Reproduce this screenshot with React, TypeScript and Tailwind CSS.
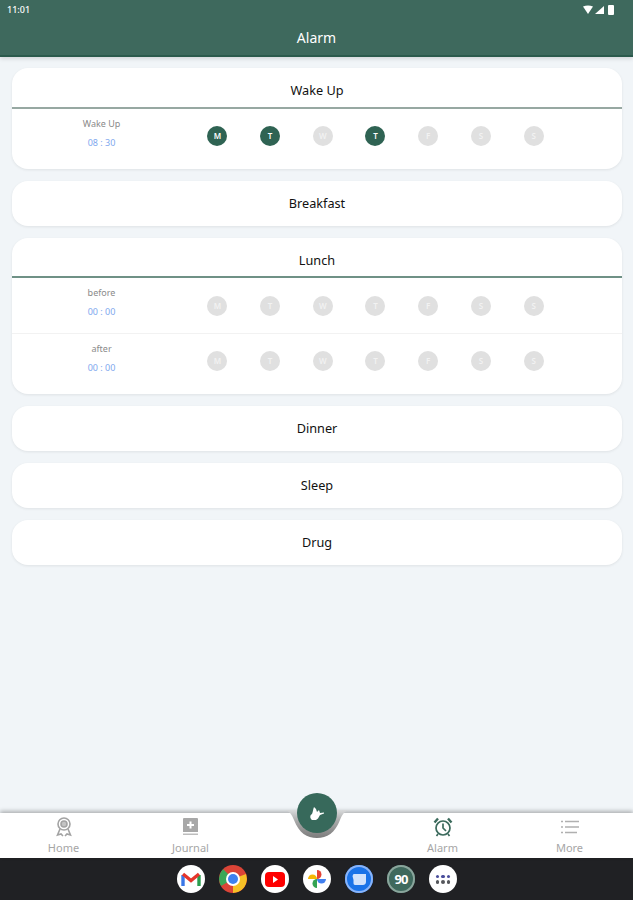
import type { ReactNode } from "react"

const DAYS = ["M", "T", "W", "T", "F", "S", "S"]

function DayDot({ label, on }: { label: string; on?: boolean }) {
  return (
    <div className="flex justify-center">
      <div
        className={`flex h-5 w-5 items-center justify-center rounded-full text-[8px] font-semibold ${
          on ? "bg-[#2f6353] text-white" : "bg-[#e0e0e0] text-[#f2f2f2]"
        }`}
      >
        {label}
      </div>
    </div>
  )
}

function AlarmRow({
  label,
  time,
  active = [],
  className = "",
}: {
  label: string
  time: string
  active?: number[]
  className?: string
}) {
  return (
    <div className={`flex items-center pr-[62px] ${className}`}>
      <div className="flex w-[179px] flex-col items-center gap-[7px] pb-[6px] text-[9px] leading-[12px]">
        <span className="text-[#8a8a8a]">{label}</span>
        <span className="text-[#7fa8ee]">{time}</span>
      </div>
      <div className="grid flex-1 grid-cols-7">
        {DAYS.map((d, i) => (
          <DayDot key={i} label={d} on={active.includes(i)} />
        ))}
      </div>
    </div>
  )
}

function Card({
  title,
  headClass = "h-[45px]",
  children,
}: {
  title: string
  headClass?: string
  children?: ReactNode
}) {
  return (
    <div className="overflow-hidden rounded-[16px] bg-white shadow-[0_1px_3px_rgba(0,0,0,0.08)]">
      <div className={`flex items-center justify-center text-[12.7px] text-[#111] ${headClass}`}>{title}</div>
      {children}
    </div>
  )
}

function NavItem({ label, icon }: { label: string; icon: ReactNode }) {
  return (
    <div className="flex w-[127px] flex-col items-center pt-[4px]">
      <div className="flex h-[20px] items-center justify-center">{icon}</div>
      <span className="mt-[4px] text-[11px] leading-[14px] text-[#a6a6a6]">{label}</span>
    </div>
  )
}

function DockIcon({ children, bg = "bg-white" }: { children: ReactNode; bg?: string }) {
  return (
    <div className={`flex h-[28px] w-[28px] items-center justify-center overflow-hidden rounded-full ${bg}`}>
      {children}
    </div>
  )
}

export default function App() {
  return (
    <div
      className="relative flex h-[900px] w-[633px] flex-col overflow-hidden bg-[#f1f5f8]"
      style={{ fontFamily: '"Noto Sans", sans-serif' }}
    >
      {/* status bar + title */}
      <header className="relative z-10 h-[57px] border-b-2 border-[#2b5a4c] bg-[#3e695d] text-white shadow-[0_2px_4px_rgba(0,0,0,0.12)]">
        <div className="flex h-[19px] items-center justify-between pl-[7px] pr-[19px]">
          <span className="text-[9px] font-medium">11:01</span>
          <svg width="31" height="10" viewBox="0 0 31 10" fill="white">
            <path d="M0 1.5 Q5 -0.5 10 1.5 L5 9 Z" />
            <path d="M12 9 L21 1 V9 Z" />
            <rect x="25" y="0" width="6" height="10" rx="1" />
          </svg>
        </div>
        <div className="flex h-[36px] items-center justify-center text-[14px]">Alarm</div>
      </header>

      {/* list */}
      <main className="flex flex-1 flex-col gap-[12px] pl-[12px] pr-[11px] pt-[11px]">
        <Card title="Wake Up" headClass="h-[41px] border-b-2 border-[#97a8a2] pt-[6px]">
          <AlarmRow label="Wake Up" time="08 : 30" active={[0, 1, 3]} className="h-[60px] pb-[6px]" />
        </Card>
        <Card title="Breakfast" />
        <Card title="Lunch" headClass="h-[40px] border-b-2 border-[#6f9186] pt-[7px]">
          <AlarmRow label="before" time="00 : 00" className="h-[56px] border-b border-[#f2f2f2]" />
          <AlarmRow label="after" time="00 : 00" className="h-[60px] pb-[6px]" />
        </Card>
        <Card title="Dinner" />
        <Card title="Sleep" />
        <Card title="Drug" />
      </main>

      {/* bottom nav */}
      <nav className="relative flex h-[45px] justify-between bg-white shadow-[0_-2px_4px_rgba(0,0,0,0.28)]">
        <div className="flex">
          <NavItem
            label="Home"
            icon={
              <svg width="18" height="20" viewBox="0 0 18 20" fill="none" stroke="#a3a3a3" strokeWidth="1.6">
                <circle cx="9" cy="7" r="6" />
                <circle cx="9" cy="7" r="3" fill="#c4c4c4" />
                <path d="M5 12 L2.5 18 L6 17 L8 19 M13 12 L15.5 18 L12 17 L10 19" />
              </svg>
            }
          />
          <NavItem
            label="Journal"
            icon={
              <svg width="15" height="18" viewBox="0 0 15 18">
                <path d="M1 0 H14 a1 1 0 0 1 1 1 V14 H0 V1 a1 1 0 0 1 1 -1 Z" fill="#a8a8a8" />
                <rect x="0" y="15.5" width="15" height="1.5" fill="#bdbdbd" />
                <path d="M6.5 3.5 H8.5 V6 H11 V8 H8.5 V10.5 H6.5 V8 H4 V6 H6.5 Z" fill="white" />
              </svg>
            }
          />
        </div>
        <div className="flex">
          <NavItem
            label="Alarm"
            icon={
              <svg width="20" height="20" viewBox="0 0 20 20" fill="none" stroke="#3b6a5c" strokeWidth="1.7">
                <circle cx="10" cy="11" r="7" />
                <path d="M10 6.5 V11 L13 14" />
                <path d="M1.5 5.5 L5 1.5 M18.5 5.5 L15 1.5" strokeWidth="2.4" />
                <path d="M5 17 L3.5 19 M15 17 L16.5 19" />
              </svg>
            }
          />
          <NavItem
            label="More"
            icon={
              <svg width="18" height="14" viewBox="0 0 18 14" stroke="#b0b0b0" strokeWidth="1.6">
                <path d="M4 1.5 H18 M4 7 H18 M4 12.5 H16" />
                <path d="M0 1.5 H2 M0 7 H2 M0 12.5 H2" />
              </svg>
            }
          />
        </div>

        {/* notch + fab */}
        <svg className="absolute left-[284px] top-[-3px]" width="66" height="30" viewBox="0 0 66 30">
          <defs>
            <linearGradient id="cup" x1="0" y1="0" x2="0" y2="1">
              <stop offset="0" stopColor="#d8dadb" />
              <stop offset="0.4" stopColor="#a8a8a8" />
              <stop offset="1" stopColor="#7c7c7c" />
            </linearGradient>
          </defs>
          <path d="M0 0 H66 C60 1 58 5 56 10 C51 23 43 28 33 28 C23 28 15 23 10 10 C8 5 6 1 0 0 Z" fill="url(#cup)" />
        </svg>
        <div className="absolute left-[297px] top-[-20px] flex h-[40px] w-[40px] items-center justify-center rounded-full bg-[#37695b]">
          <svg width="16" height="13" viewBox="0 0 16 13" fill="white">
            <path d="M5 0 L7 2 L8 5 L10 3 L11 6 L15 5.5 L15 6.5 L11 8 L9 11.5 L7 13 H3 C0.5 11 1 8 3 7 C4 5 4 2 5 0 Z" />
          </svg>
        </div>
      </nav>

      {/* android dock */}
      <footer className="flex h-[42px] items-center justify-center gap-[14px] bg-[#202124] pl-[1px]">
        <DockIcon>
          <svg width="20" height="16" viewBox="0 0 20 16" fill="none" strokeWidth="3.4">
            <path d="M2 15 V4" stroke="#3b78e7" />
            <path d="M18 15 V4" stroke="#2a9d4e" />
            <path d="M2 3 L10 9.5 L18 3" stroke="#e5352b" />
          </svg>
        </DockIcon>
        <DockIcon bg="bg-[#db4437]">
          <svg width="28" height="28" viewBox="0 0 28 28">
            <path d="M14 14 L2 21 A14 14 0 0 1 4 4 Z" fill="#3aa757" />
            <path d="M14 14 L14 28 A14 14 0 0 0 27 9 Z" fill="#f6c026" />
            <circle cx="14" cy="14" r="7" fill="white" />
            <circle cx="14" cy="14" r="5" fill="#3d81f0" />
          </svg>
        </DockIcon>
        <DockIcon>
          <svg width="20" height="15" viewBox="0 0 20 15">
            <rect width="20" height="15" rx="4" fill="#f00" />
            <path d="M8 4 L13 7.5 L8 11 Z" fill="white" />
          </svg>
        </DockIcon>
        <DockIcon>
          <svg width="20" height="20" viewBox="0 0 20 20">
            <path d="M10 10 H1 A4.5 4.5 0 0 1 10 10 Z" fill="#f6b704" />
            <path d="M10 10 V1 A4.5 4.5 0 0 1 10 10 Z" fill="#e54335" />
            <path d="M10 10 H19 A4.5 4.5 0 0 1 10 10 Z" fill="#4280ef" />
            <path d="M10 10 V19 A4.5 4.5 0 0 1 10 10 Z" fill="#34a353" />
          </svg>
        </DockIcon>
        <DockIcon bg="bg-[#1a73e8] ring-2 ring-inset ring-[#8ab4f8]">
          <svg width="15" height="13" viewBox="0 0 15 13">
            <path d="M1.5 1 H14 V9 C14 11 12.5 12 11 12 H3 C2 12 1.5 11 1.5 10 V7 L0.5 3 Z" fill="#d2e3fc" />
          </svg>
        </DockIcon>
        <DockIcon bg="bg-[#3e695d] ring-2 ring-inset ring-[#8aa59c]">
          <span className="text-[13px] font-bold leading-none tracking-[-1px] text-white">90</span>
        </DockIcon>
        <DockIcon>
          <div className="grid grid-cols-3 gap-[2px]">
            {["#4a4e9c", "#4a4e9c", "#4a4e9c", "#55575c", "#55575c", "#55575c"].map((c, i) => (
              <div key={i} className="h-[3.5px] w-[3.5px] rounded-full" style={{ backgroundColor: c }} />
            ))}
          </div>
        </DockIcon>
      </footer>
    </div>
  )
}
